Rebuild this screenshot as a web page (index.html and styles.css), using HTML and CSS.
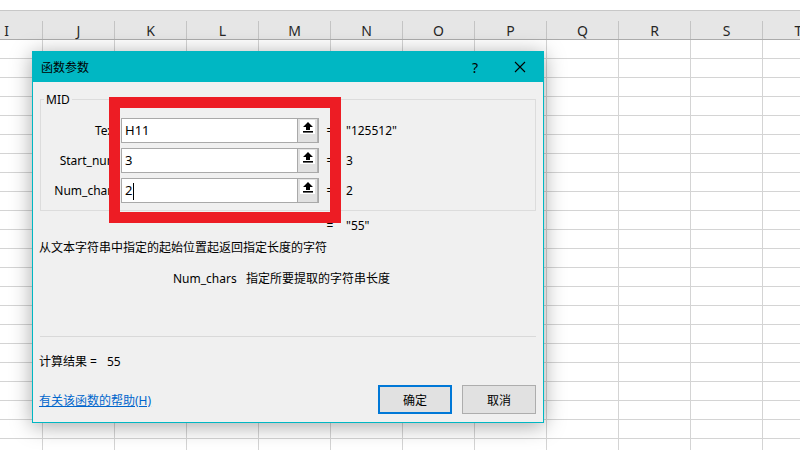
FILE: index.html
```html
<!DOCTYPE html>
<html lang="zh-CN">

<head>
    <meta charset="UTF-8">
    <meta name="viewport" content="width=device-width, initial-scale=1.0">
    <title>函数参数</title>
    <link rel="stylesheet" href="styles.css">
</head>

<body>
    <div class="sheet">
        <div class="col-head">
            <div class="col">I</div>
            <div class="col">J</div>
            <div class="col">K</div>
            <div class="col">L</div>
            <div class="col">M</div>
            <div class="col">N</div>
            <div class="col">O</div>
            <div class="col">P</div>
            <div class="col">Q</div>
            <div class="col">R</div>
            <div class="col">S</div>
            <div class="col">T</div>
        </div>
        <div class="cells"></div>
    </div>

    <div class="dialog">
        <div class="titlebar">
            <span class="title">函数参数</span>
            <span class="help">?</span>
            <span class="close">
                <svg width="12" height="12" viewBox="0 0 12 12">
                    <path d="M1 1 L11 11 M11 1 L1 11" stroke="#000" stroke-width="1.1" fill="none" />
                </svg>
            </span>
        </div>
        <div class="dlg-body">
            <fieldset class="args">
                <legend>MID</legend>
                <div class="arg-row">
                    <label>Text</label>
                    <div class="ref-input">
                        <span class="val">H11</span>
                        <span class="ref-btn"><span class="ref-icon"><svg width="10" height="11" viewBox="0 0 10 11"><path d="M5 0 L10 5 H7 V8 H3 V5 H0 Z" fill="#000" /><rect x="0" y="9" width="10" height="1.6" fill="#000" /></svg></span></span>
                    </div>
                    <span class="eq">=</span>
                    <span class="res">"125512"</span>
                </div>
                <div class="arg-row">
                    <label>Start_num</label>
                    <div class="ref-input">
                        <span class="val">3</span>
                        <span class="ref-btn"><span class="ref-icon"><svg width="10" height="11" viewBox="0 0 10 11"><path d="M5 0 L10 5 H7 V8 H3 V5 H0 Z" fill="#000" /><rect x="0" y="9" width="10" height="1.6" fill="#000" /></svg></span></span>
                    </div>
                    <span class="eq">=</span>
                    <span class="res">3</span>
                </div>
                <div class="arg-row">
                    <label>Num_chars</label>
                    <div class="ref-input">
                        <span class="val">2<span class="caret"></span></span>
                        <span class="ref-btn"><span class="ref-icon"><svg width="10" height="11" viewBox="0 0 10 11"><path d="M5 0 L10 5 H7 V8 H3 V5 H0 Z" fill="#000" /><rect x="0" y="9" width="10" height="1.6" fill="#000" /></svg></span></span>
                    </div>
                    <span class="eq">=</span>
                    <span class="res">2</span>
                </div>
            </fieldset>

            <div class="total"><span class="eq">=</span><span class="res">"55"</span></div>
            <p class="desc">从文本字符串中指定的起始位置起返回指定长度的字符</p>
            <p class="arg-desc"><span class="arg-name">Num_chars</span>指定所要提取的字符串长度</p>
            <div class="sep"></div>
            <div class="result">计算结果 =<span class="result-val">55</span></div>
            <div class="footer">
                <a href="#" class="help-link">有关该函数的帮助(H)</a>
                <button class="btn ok">确定</button>
                <button class="btn">取消</button>
            </div>
        </div>
    </div>

    <!-- 标注框 -->
    <div class="mark"></div>
</body>

</html>
```

FILE: styles.css
```css
body {
    margin: 0;
    background: #fff;
    font-family: "Noto Sans", "Noto Sans CJK SC", sans-serif;
    font-size: 12px;
    color: #000;
    overflow: hidden;
    width: 800px;
    height: 450px;
}

.sheet {
    padding-top: 10px;
}

.col-head {
    display: flex;
    height: 28px;
    margin-left: -29px;
    background: #e6e6e6;
    border-top: 1px solid #c8c8c8;
    border-bottom: 1px solid #ababab;
}

.col-head .col {
    flex: 0 0 72px;
    box-sizing: border-box;
    height: 18px;
    margin-top: 10px;
    line-height: 20px;
    text-align: center;
    border-right: 1px solid #c4c4c4;
    font-size: 14px;
    color: #262626;
}

.cells {
    height: 410px;
    background-image:
        linear-gradient(to right, transparent 71px, #d4d4d4 71px),
        linear-gradient(to bottom, transparent 18px, #d4d4d4 18px);
    background-size: 72px 19px;
    background-position: -29px 0;
}

.dialog {
    position: absolute;
    left: 32px;
    top: 51px;
    width: 512px;
    height: 372px;
    box-sizing: border-box;
    border: 1px solid #00b7c3;
    background: #f0f0f0;
    box-shadow: 0 3px 20px rgba(0, 0, 0, 0.35);
}

.titlebar {
    display: flex;
    align-items: center;
    height: 30px;
    padding-left: 8px;
    background: #00b7c3;
}

.titlebar .help {
    margin-left: auto;
    width: 30px;
    margin-right: 7px;
    text-align: center;
    font-size: 14px;
}

.titlebar .close {
    width: 46px;
    height: 30px;
    display: flex;
    align-items: center;
    justify-content: center;
}

.dlg-body {
    padding: 0 7px 0 6px;
}

.args {
    margin: 9px 0 0 1px;
    padding: 10px 0 7px 0;
    border: 1px solid #dcdcdc;
    min-width: 0;
}

.args legend {
    margin-left: 3px;
    padding: 0 2px;
    line-height: 17px;
    font-size: 12px;
}

.arg-row {
    display: flex;
    align-items: center;
    height: 25px;
    margin-bottom: 5px;
}

.arg-row:last-child {
    margin-bottom: 0;
}

.arg-row label {
    width: 77px;
    margin-right: 3px;
    text-align: right;
}

.ref-input {
    display: flex;
    width: 198px;
    height: 25px;
    box-sizing: border-box;
    border: 1px solid #a9a9a9;
    background: #fff;
}

.ref-input .val {
    flex: 1;
    padding-left: 3px;
    line-height: 23px;
    font-size: 13px;
}

.caret {
    display: inline-block;
    width: 1px;
    height: 17px;
    background: #000;
    vertical-align: middle;
    margin-left: 1px;
}

.ref-btn {
    width: 21px;
    box-sizing: border-box;
    border-left: 1px solid #a9a9a9;
    border-right: 1px solid #b4b4b4;
    background: #e1e1e1;
    padding: 1px 0 0 2px;
}

.ref-icon {
    display: flex;
    align-items: center;
    justify-content: center;
    width: 15px;
    height: 14px;
    background: #fff;
}

.eq {
    width: 22px;
    text-align: center;
}

.res {
    margin-left: 5px;
}

.total {
    display: flex;
    margin-top: 6px;
    padding-left: 280px;
    line-height: 17px;
}

.desc {
    margin: 5px 0 0;
    line-height: 17px;
}

.arg-desc {
    margin: 14px 0 0;
    padding-left: 134px;
    line-height: 17px;
}

.arg-name {
    display: inline-block;
    width: 73px;
}

.sep {
    margin: 49px 0 0 0;
    height: 1px;
    background: #d9d9d9;
    margin-left: 1px;
}

.result {
    margin-top: 16px;
    line-height: 17px;
}

.result-val {
    margin-left: 10px;
}

.footer {
    display: flex;
    align-items: center;
    margin-top: 15px;
}

.help-link {
    flex: 1;
    color: #0066cc;
    text-decoration: underline;
}

.btn {
    width: 74px;
    height: 29px;
    box-sizing: border-box;
    margin-left: 10px;
    border: 1px solid #adadad;
    background: #e1e1e1;
    font-family: "Noto Sans", "Noto Sans CJK SC", sans-serif;
    font-size: 12px;
    color: #000;
    padding: 0;
}

.btn.ok {
    border: 2px solid #0078d7;
}

.mark {
    position: absolute;
    left: 109px;
    top: 97px;
    width: 232px;
    height: 126px;
    box-sizing: border-box;
    border: 11px solid #ed1c24;
}
```
